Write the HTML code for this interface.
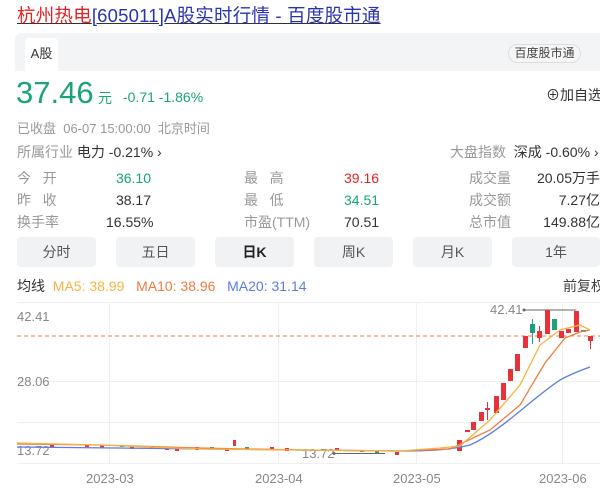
<!DOCTYPE html>
<html><head><meta charset="utf-8"><style>
*{margin:0;padding:0;box-sizing:border-box}
body{width:600px;height:491px;overflow:hidden;background:#fff;font-family:"Liberation Sans","Noto Sans CJK SC",sans-serif;position:relative;color:#333}
.a{position:absolute;white-space:nowrap}
.g{color:#999}
.btn{position:absolute;top:237px;height:30px;width:79px;background:#f1f2f4;border-radius:4px;text-align:center;line-height:30px;font-size:14px;color:#555}
</style></head><body>
<div class="a" style="left:17px;top:2px;font-size:18.5px;letter-spacing:0.2px;text-decoration:underline"><span style="color:#e02424">杭州热电</span><span style="color:#2a33b0">[605011]A股实时行情 - 百度股市通</span></div>
<div class="a" style="left:15px;top:33px;width:585px;height:38px;background:#f3f4f6;border-radius:6px 0 0 0"></div>
<div class="a" style="left:25px;top:38px;width:33px;height:33px;background:#fff;border-radius:4px 4px 0 0;font-size:13px;line-height:31px;text-align:center;color:#333">A股</div>
<div class="a" style="left:508px;top:44px;width:73px;height:19px;border:1px solid #ddd;border-radius:10px;font-size:12px;line-height:17px;text-align:center;color:#444;background:#f6f6f6">百度股市通</div>
<div class="a" style="left:16px;top:75px;font-size:31px;color:#1aa37a">37.46</div>
<div class="a" style="left:98px;top:88px;font-size:14px;color:#1aa37a">元</div>
<div class="a" style="left:123px;top:89px;font-size:14px;color:#1aa37a">-0.71 -1.86%</div>
<div class="a" style="left:546px;top:85px;font-size:14px;color:#333">⊕加自选</div>
<div class="a g" style="left:17px;top:118px;font-size:13px">已收盘&nbsp; 06-07 15:00:00&nbsp; 北京时间</div>
<div class="a" style="left:17px;top:142px;font-size:14px"><span class="g">所属行业</span> 电力 -0.21% ›</div>
<div class="a" style="left:450px;top:142px;font-size:14px"><span class="g">大盘指数</span>&nbsp; 深成 -0.60% ›</div>
<div class="a g" style="left:17px;top:167px;font-size:14px;line-height:22px">今&nbsp;&nbsp;&nbsp;开<br>昨&nbsp;&nbsp;&nbsp;收<br>换手率</div>
<div class="a" style="left:106px;top:167px;font-size:14px;line-height:22px;text-align:right;width:45px"><span style="color:#1aa37a">36.10</span><br>38.17<br></div>
<div class="a" style="left:106px;top:211px;font-size:14px;line-height:22px">16.55%</div>
<div class="a g" style="left:244px;top:167px;font-size:14px;line-height:22px">最&nbsp;&nbsp;&nbsp;高<br>最&nbsp;&nbsp;&nbsp;低<br>市盈(TTM)</div>
<div class="a" style="left:344px;top:167px;font-size:14px;line-height:22px"><span style="color:#e02424">39.16</span><br><span style="color:#1aa37a">34.51</span><br>70.51</div>
<div class="a g" style="left:469px;top:167px;font-size:14px;line-height:22px">成交量<br>成交额<br>总市值</div>
<div class="a" style="left:530px;top:167px;width:70px;font-size:14px;line-height:22px;text-align:right">20.05万手<br>7.27亿<br>149.88亿</div>
<div class="btn" style="left:17px">分时</div>
<div class="btn" style="left:116px">五日</div>
<div class="btn" style="left:215px;color:#222;font-weight:bold">日K</div>
<div class="btn" style="left:314px">周K</div>
<div class="btn" style="left:413px">月K</div>
<div class="btn" style="left:512px;width:88px">1年</div>
<div class="a" style="left:17px;top:276px;font-size:14px">均线&nbsp; <span style="color:#f5b342">MA5: 38.99</span>&nbsp;&nbsp; <span style="color:#f07b3f">MA10: 38.96</span>&nbsp;&nbsp; <span style="color:#5b7ce6">MA20: 31.14</span></div>
<div class="a" style="left:563px;top:276px;font-size:14px;color:#444">前复权</div>
<svg class="a" style="left:0;top:295px" width="600" height="196" viewBox="0 295 600 196">
<g stroke="#f0f0f0" stroke-width="1">
<line x1="17" y1="302.5" x2="600" y2="302.5"/><line x1="17" y1="381.5" x2="600" y2="381.5"/><line x1="17" y1="422.5" x2="600" y2="422.5"/><line x1="17" y1="463.5" x2="600" y2="463.5"/>
<line x1="109.5" y1="302" x2="109.5" y2="463"/><line x1="278.5" y1="302" x2="278.5" y2="463"/><line x1="416.5" y1="302" x2="416.5" y2="463"/><line x1="562.5" y1="302" x2="562.5" y2="463"/>
</g>
<g font-family="Liberation Sans" font-size="13" fill="#888">
<text x="17" y="321">42.41</text><text x="17" y="386">28.06</text><text x="17" y="455">13.72</text>
<text x="86" y="483">2023-03</text><text x="255" y="483">2023-04</text><text x="393" y="483">2023-05</text><text x="539" y="483">2023-06</text>
<text x="490" y="314">42.41</text><text x="302" y="458">13.72</text>
</g>
<line x1="17" y1="336" x2="600" y2="336" stroke="#f07b3f" stroke-dasharray="4,3"/>
<line x1="524" y1="310" x2="576" y2="310" stroke="#666"/><circle cx="524" cy="310" r="1.5" fill="#666"/>
<line x1="334" y1="453.5" x2="385" y2="453.5" stroke="#666"/><circle cx="334" cy="453.5" r="1.5" fill="#666"/>
<g fill="#e8323a">
<rect x="50" y="444" width="4" height="3"/><rect x="85" y="445" width="4" height="2"/><rect x="100" y="445" width="4" height="3"/><rect x="130" y="446" width="4" height="3"/><rect x="150" y="446" width="4" height="2"/><rect x="165" y="447" width="4" height="3"/><rect x="175" y="448" width="4" height="3"/><rect x="195" y="447" width="4" height="3"/><rect x="225" y="448" width="4" height="3"/><rect x="233" y="440" width="3" height="6"/><rect x="270" y="447" width="4" height="3"/><rect x="285" y="448" width="4" height="3"/><rect x="335" y="448" width="4" height="3"/><rect x="395" y="452" width="4" height="3"/>
<rect x="457" y="440" width="5" height="11"/><rect x="465" y="430" width="5" height="2"/><rect x="471" y="422" width="5" height="8"/><rect x="479" y="412" width="5" height="9"/><rect x="487" y="402" width="1" height="18"/><rect x="485" y="408" width="5" height="2"/><rect x="494" y="396" width="5" height="17"/><rect x="501" y="383" width="5" height="17"/><rect x="508" y="369" width="5" height="12"/><rect x="515" y="354" width="5" height="17"/><rect x="523" y="336" width="5" height="12"/><rect x="537" y="331" width="5" height="7"/><rect x="539" y="326" width="1" height="16"/><rect x="545" y="310" width="5" height="24"/><rect x="559" y="331" width="5" height="7"/><rect x="566" y="329" width="5" height="4"/><rect x="574" y="311" width="5" height="21"/><rect x="588" y="336" width="5" height="5"/><rect x="590" y="336" width="1" height="13"/>
</g>
<g fill="#1aa37a">
<rect x="120" y="445" width="4" height="2"/><rect x="210" y="447" width="4" height="2"/><rect x="245" y="447" width="4" height="2"/><rect x="360" y="450" width="4" height="2"/><rect x="375" y="451" width="4" height="2"/>
<rect x="530" y="324" width="5" height="9"/><rect x="532" y="319" width="1" height="25"/><rect x="552" y="319" width="5" height="11"/><rect x="581" y="330" width="5" height="2"/>
</g>
<g fill="none" stroke-width="1.3">
<path stroke="#5b7ce6" d="M17,447 L400,451 C430,451 450,450 470,445 C500,432 530,400 560,380 C575,372 585,369 590,367"/>
<polyline stroke="#f07b3f" points="17,444 100,445 200,448 300,450 400,451 450,449 490,430 520,405 545,363 565,338 580,332 590,330"/>
<polyline stroke="#f5b342" points="17,443 100,445 200,449 300,450 400,451 440,448 460,446 490,420 520,385 540,345 560,330 580,325 590,330"/>
</g>
</svg>
</body></html>
